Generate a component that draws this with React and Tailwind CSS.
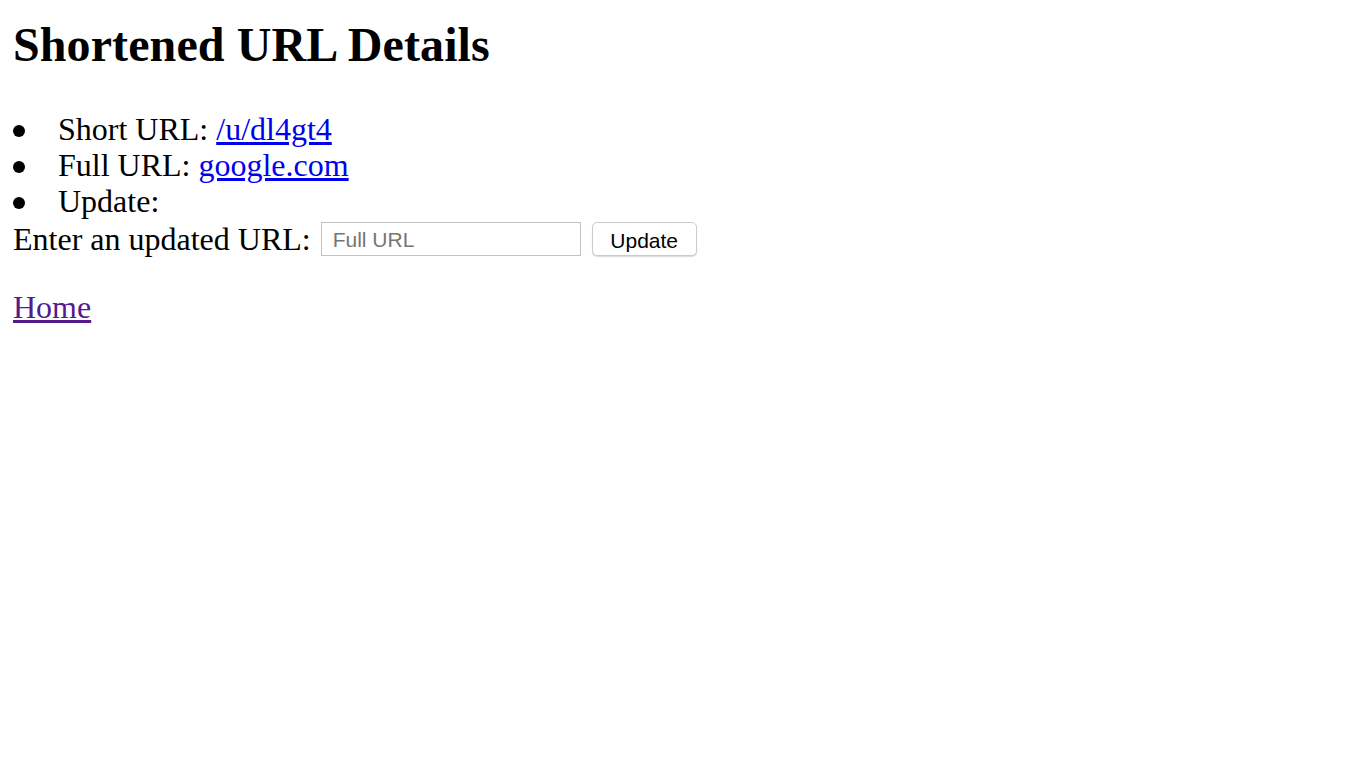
import React from 'react';

const serif = "font-['Liberation_Serif','Times_New_Roman',serif]";
const sans = "font-['Liberation_Sans',Arial,sans-serif]";

const items = [
  { label: 'Short URL:', link: '/u/dl4gt4' },
  { label: 'Full URL:', link: 'google.com' },
  { label: 'Update:' },
];

export default function App() {
  return (
    <div className={`min-h-screen bg-white text-black pl-[13px] pt-[18px] ${serif} text-[32px]`}>
      <h2 className="text-[48px] font-bold leading-[53px] tracking-[0.1px]">Shortened URL Details</h2>

      {/* details list */}
      <ul className="mt-[40px] leading-[36px]">
        {items.map((item) => (
          <li key={item.label} className="flex items-center">
            <span className="w-[45px] shrink-0 flex">
              <span className="w-[12px] h-[12px] rounded-full bg-black mt-[3px]" />
            </span>
            <span>
              {item.label}
              {item.link && (
                <>
                  {' '}
                  <a href="#" className="text-[#0000ee] underline">{item.link}</a>
                </>
              )}
            </span>
          </li>
        ))}
      </ul>

      <form className="flex items-center h-[36px] mt-[2px]" onSubmit={(e) => e.preventDefault()}>
        <label className="mr-[10px]">Enter an updated URL:</label>
        <input
          type="text"
          placeholder="Full URL"
          className={`w-[260px] h-[34px] border border-[#c2c2c2] pl-[11px] pr-[10px] pt-[2px] text-[21px] ${sans} placeholder:text-[#757575] outline-none`}
        />
        <button
          type="submit"
          className={`ml-[11px] w-[105px] h-[34px] rounded-[5px] border border-[#cbcbcb] bg-white shadow-[0_1px_1px_rgba(0,0,0,0.15)] text-[21px] pt-[2px] ${sans}`}
        >
          Update
        </button>
      </form>

      <p className="mt-[32px] leading-[36px]">
        <a href="#" className="text-[#551a8b] underline">Home</a>
      </p>
    </div>
  );
}
